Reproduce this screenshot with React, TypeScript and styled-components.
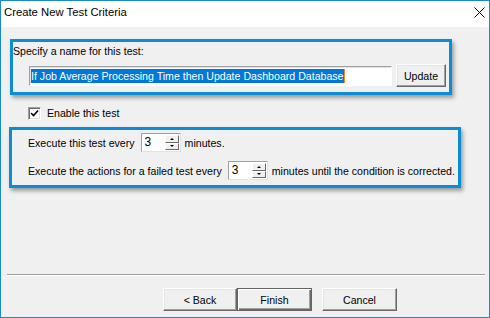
import styled, { createGlobalStyle } from "styled-components";

const GlobalStyle = createGlobalStyle`
  html, body {
    margin: 0;
    padding: 0;
    background: #f0f0f0;
  }
  * {
    box-sizing: border-box;
  }
`;

const accent = "#0b8dd6";
const face = "#f0f0f0";

const Window = styled.div`
  width: 490px;
  height: 318px;
  display: flex;
  flex-direction: column;
  border: 1px solid #1a88d5;
  background: ${face};
  font-family: "Liberation Sans", Arial, sans-serif;
  font-size: 10.6px;
  color: #000;
`;

const TitleBar = styled.div`
  height: 26px;
  display: flex;
  align-items: center;
  justify-content: space-between;
  padding: 0 4px 4px 3px;
  background: #fff;
`;

const Title = styled.span`
  font-size: 11.3px;
  line-height: 14px;
`;

const Body = styled.div`
  flex: 1;
  display: flex;
  flex-direction: column;
  padding-bottom: 6px;
`;

const Highlight = styled.div<{ $left: number; $top: number; $width: number; $height: number }>`
  margin: ${(p) => p.$top}px 0 0 ${(p) => p.$left}px;
  width: ${(p) => p.$width}px;
  height: ${(p) => p.$height}px;
  border: 3px solid ${accent};
  box-shadow: 2px 3px 4px rgba(0, 0, 0, 0.35);
  display: flex;
  flex-direction: column;
`;

const NameBox = styled(Highlight)`
  padding-top: 3px;
`;

const IntervalBox = styled(Highlight)`
  padding: 3px 0 0 16px;
  gap: 9px;
`;

const Label = styled.div`
  line-height: 13px;
  height: 13px;
  white-space: nowrap;
`;

const NameRow = styled.div`
  margin-top: 6px;
  padding-left: 16px;
  display: flex;
  align-items: center;
  gap: 4px;
`;

const TextField = styled.div`
  width: 363px;
  height: 20px;
  background: #fff;
  border: 1px solid;
  border-color: #a0a0a0 #fff #fff #a0a0a0;
  box-shadow: inset 1px 1px 0 #e3e3e3;
  padding: 2px 0 0 1px;
  white-space: nowrap;
  overflow: hidden;
`;

const Selected = styled.span`
  display: inline-block;
  background: #0078d7;
  color: #fff;
  line-height: 14px;
  border-right: 1px solid #f0892a;
`;

const Button = styled.button<{ $width: number; $default?: boolean; $spaced?: boolean }>`
  width: ${(p) => p.$width}px;
  height: 23px;
  margin-left: ${(p) => (p.$spaced ? 10 : 0)}px;
  padding: 0;
  font: inherit;
  color: #000;
  background: ${face};
  border: 1px solid;
  border-color: ${(p) => (p.$default ? "#646464" : "#fff #696969 #696969 #fff")};
  box-shadow: ${(p) =>
    p.$default
      ? "inset 1px 1px 0 #fff, inset -1px -1px 0 #696969, inset -2px -2px 0 #a0a0a0"
      : "inset -1px -1px 0 #a0a0a0, inset 1px 1px 0 #e3e3e3"};
`;

const CheckRow = styled.label`
  margin: 12px 0 0 27px;
  display: flex;
  align-items: center;
  gap: 6px;
  line-height: 13px;
`;

const CheckBox = styled.span`
  width: 13px;
  height: 13px;
  display: flex;
  align-items: center;
  justify-content: center;
  background: #fff;
  border: 1px solid;
  border-color: #a0a0a0 #fff #fff #a0a0a0;
  box-shadow: inset 1px 1px 0 #696969, inset -1px -1px 0 #e3e3e3;
`;

const Row = styled.div`
  height: 19px;
  display: flex;
  align-items: center;
  white-space: nowrap;
`;

const Spin = styled.div`
  width: 40px;
  height: 19px;
  margin: 0 4px 0 6px;
  display: flex;
  border: 1px solid;
  border-color: #a0a0a0 #e3e3e3 #e3e3e3 #a0a0a0;
  background: #fff;
`;

const SpinValue = styled.span`
  flex: 1;
  padding: 1px 0 0 3px;
  font-size: 12px;
  line-height: 15px;
`;

const SpinButtons = styled.div`
  width: 15px;
  display: flex;
  flex-direction: column;
  padding: 1px 1px 1px 0;
`;

const SpinButton = styled.div<{ $down?: boolean }>`
  flex: 1;
  display: flex;
  align-items: center;
  justify-content: center;
  background: ${face};
  border: 1px solid;
  border-color: #fff #696969 #696969 #fff;

  &::after {
    content: "";
    border-left: 2px solid transparent;
    border-right: 2px solid transparent;
    ${(p) => (p.$down ? "border-top: 2px solid #000;" : "border-bottom: 2px solid #000;")}
  }
`;

const Spacer = styled.div`
  flex: 1;
`;

const Separator = styled.div`
  margin: 0 4px 0 6px;
  height: 2px;
  border-top: 1px solid #a0a0a0;
  border-bottom: 1px solid #fff;
`;

const ButtonRow = styled.div`
  margin-top: 12px;
  padding-left: 162px;
  display: flex;
`;

function Spinner({ value }: { value: number }) {
  return (
    <Spin>
      <SpinValue>{value}</SpinValue>
      <SpinButtons>
        <SpinButton />
        <SpinButton $down />
      </SpinButtons>
    </Spin>
  );
}

export default function App() {
  return (
    <>
      <GlobalStyle />
      <Window>
        <TitleBar>
          <Title>Create New Test Criteria</Title>
          <svg width="11" height="11" viewBox="0 0 11 11">
            <path d="M0.5 0.5 L10.5 10.5 M10.5 0.5 L0.5 10.5" stroke="#000" strokeWidth="1" />
          </svg>
        </TitleBar>
        <Body>
          <NameBox $left={9} $top={12} $width={442} $height={56}>
            <Label>Specify a name for this test:</Label>
            <NameRow>
              <TextField>
                <Selected>If Job Average Processing Time then Update Dashboard Database</Selected>
              </TextField>
              <Button $width={50}>Update</Button>
            </NameRow>
          </NameBox>
          <CheckRow>
            <CheckBox>
              <svg width="9" height="9" viewBox="0 0 9 9">
                <path d="M1 4 L3.5 6.5 L8 1.5" fill="none" stroke="#000" strokeWidth="1.6" />
              </svg>
            </CheckBox>
            Enable this test
          </CheckRow>
          <IntervalBox $left={8} $top={7} $width={452} $height={61}>
            <Row>
              Execute this test every
              <Spinner value={3} />
              minutes.
            </Row>
            <Row>
              Execute the actions for a failed test every
              <Spinner value={3} />
              minutes until the condition is corrected.
            </Row>
          </IntervalBox>
          <Spacer />
          <Separator />
          <ButtonRow>
            <Button $width={74}>&lt; Back</Button>
            <Button $width={75} $default>
              Finish
            </Button>
            <Button $width={75} $spaced>
              Cancel
            </Button>
          </ButtonRow>
        </Body>
      </Window>
    </>
  );
}
